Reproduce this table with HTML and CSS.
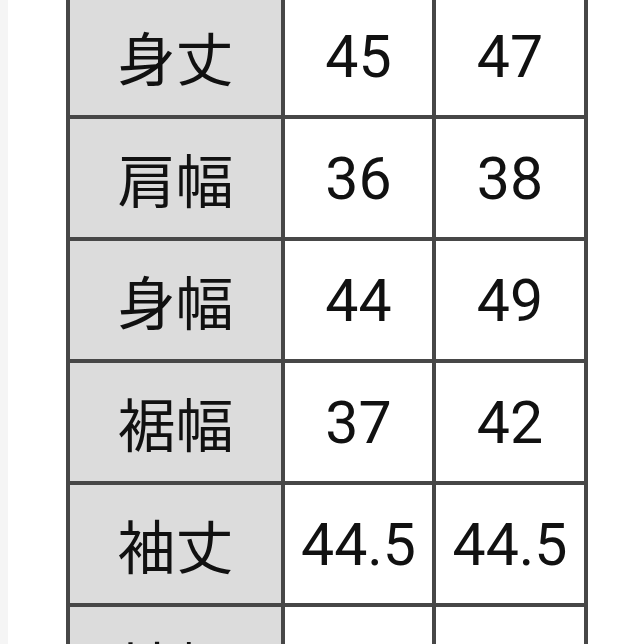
FILE: index.html
```html
<!DOCTYPE html>
<html lang="ja">
<head>
<meta charset="utf-8">
<link rel="stylesheet" href="styles.css">
</head>
<body>
<div class="page">
  <div class="strip"></div>
  <div class="sheet">
    <div class="grid">
      <div class="cell head">身丈</div><div class="cell">45</div><div class="cell">47</div>
      <div class="cell head">肩幅</div><div class="cell">36</div><div class="cell">38</div>
      <div class="cell head">身幅</div><div class="cell">44</div><div class="cell">49</div>
      <div class="cell head">裾幅</div><div class="cell">37</div><div class="cell">42</div>
      <div class="cell head">袖丈</div><div class="cell">44.5</div><div class="cell">44.5</div>
      <div class="cell head">袖幅</div><div class="cell">17.5</div><div class="cell">18</div>
    </div>
  </div>
</div>
</body>
</html>
```

FILE: styles.css
```css
html, body {
  margin: 0;
  padding: 0;
  background: #ffffff;
  overflow: hidden;
}
.page {
  display: flex;
  width: 644px;
  height: 644px;
  overflow: hidden;
}
.strip {
  width: 8px;
  flex: none;
  background: #f5f5f5;
}
.sheet {
  padding-left: 58px;
  margin-top: -7px;
}
.grid {
  display: grid;
  grid-template-columns: 211px 147px 148px;
  grid-auto-rows: 118px;
  gap: 4px;
  padding: 4px;
  background: #474747;
}
.cell {
  display: flex;
  align-items: center;
  justify-content: center;
  background: #ffffff;
  color: #111111;
  font-family: Roboto, "Noto Sans CJK JP", sans-serif;
  font-size: 59px;
  line-height: 1;
}
.head {
  background: #dcdcdc;
  font-family: "Noto Sans CJK JP", sans-serif;
  font-size: 58px;
}
```
